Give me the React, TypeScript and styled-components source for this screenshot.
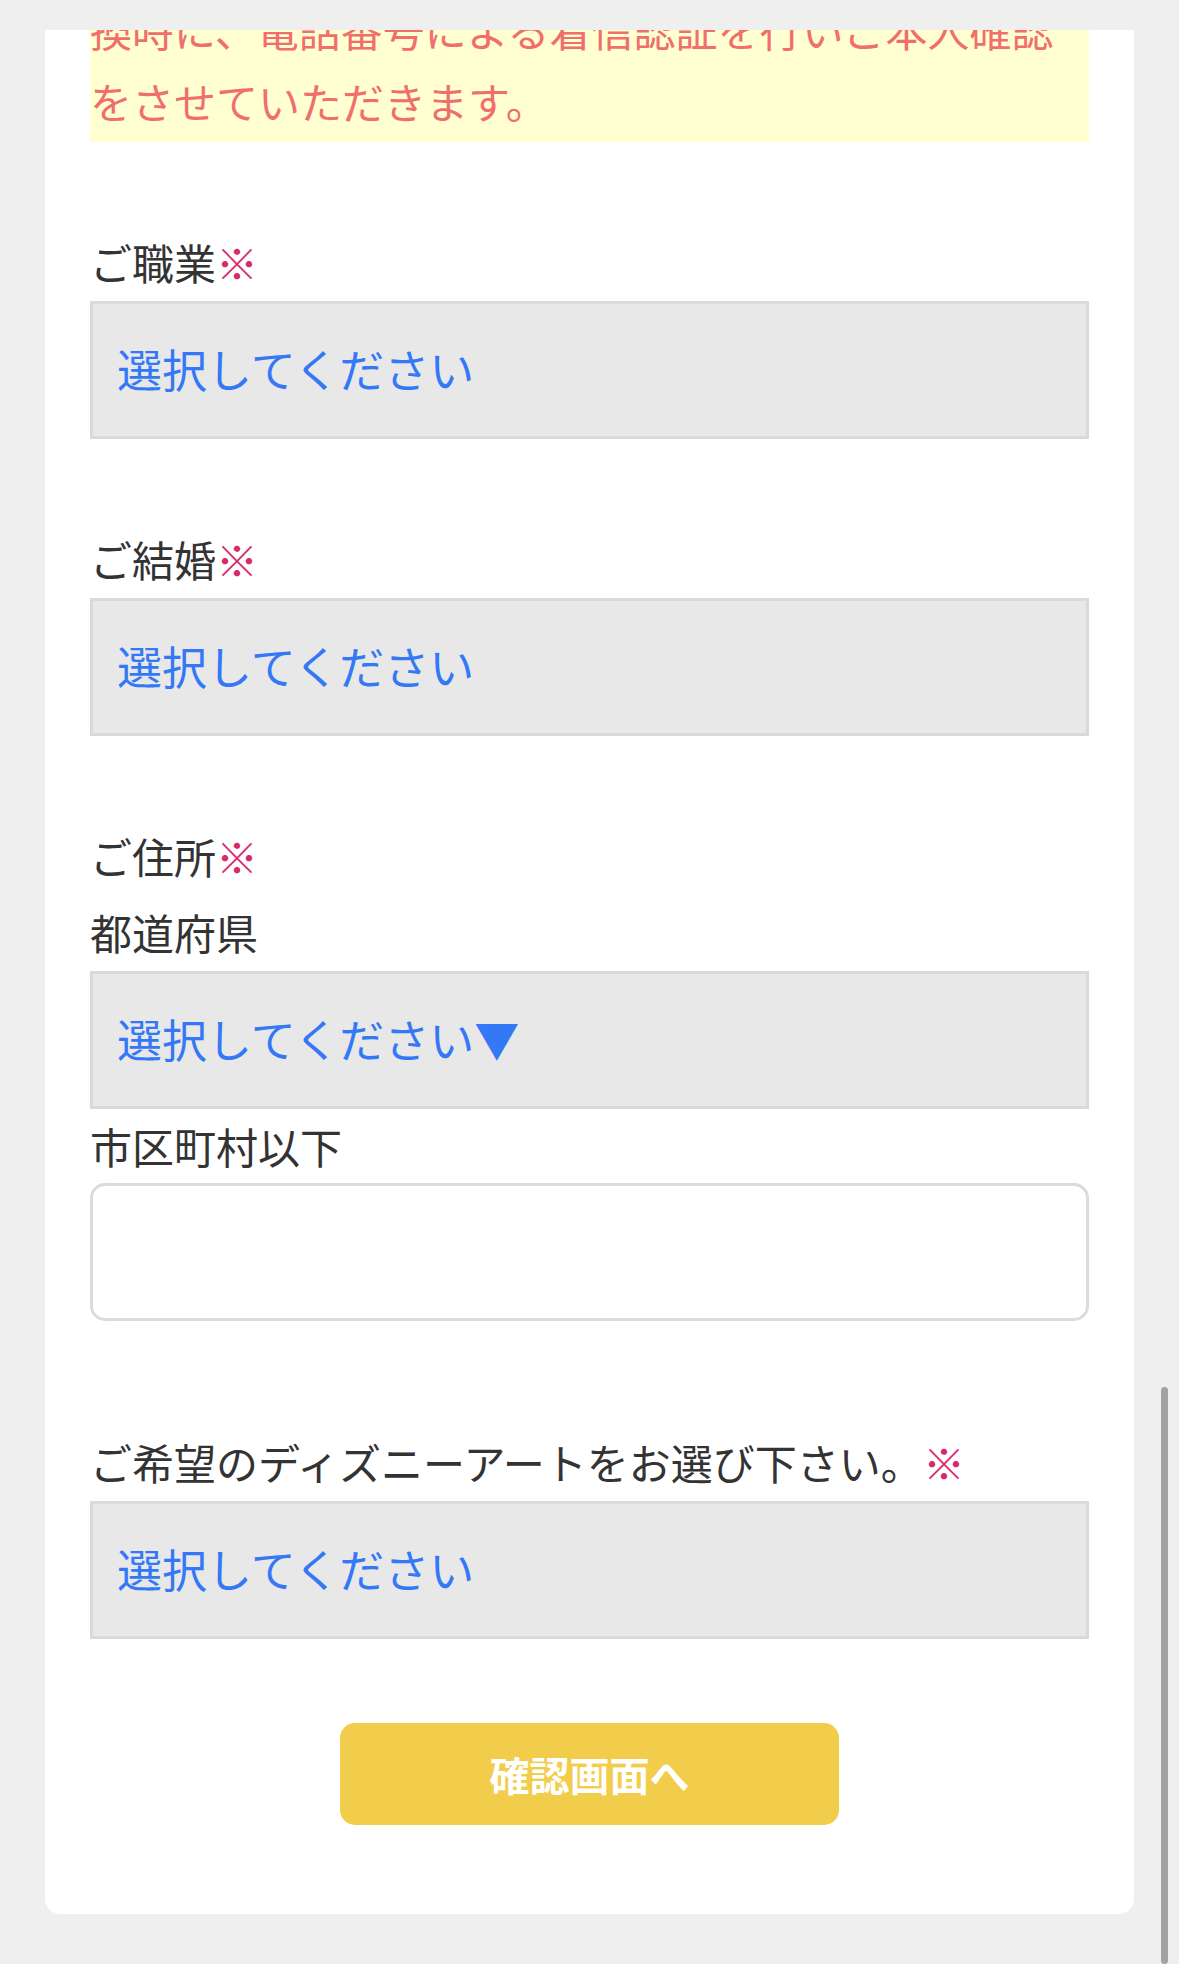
import React from 'react';
import styled, { createGlobalStyle } from 'styled-components';

const GlobalStyle = createGlobalStyle`
  html, body {
    margin: 0;
    padding: 0;
    background: #efefef;
  }
  body {
    font-family: "Noto Sans CJK JP", "Noto Sans", sans-serif;
    color: #333333;
  }
  * {
    box-sizing: border-box;
  }
`;

const Page = styled.div`
  padding: 30px 45px 50px;
`;

const Card = styled.form`
  background: #ffffff;
  border-radius: 0 0 15px 15px;
  overflow: hidden;
  padding: 0 45px 89px;
  display: flex;
  flex-direction: column;
`;

const Notice = styled.p`
  margin: -37px 0 0;
  padding-bottom: 5px;
  background: #ffffd1;
  color: #f06e6e;
  font-size: 42px;
  line-height: 72px;
`;

const Field = styled.div<{ $gap?: number }>`
  display: flex;
  flex-direction: column;
  margin-top: ${({ $gap }) => $gap ?? 90}px;
`;

const Label = styled.label<{ $top?: number; $bottom?: number }>`
  display: block;
  font-size: 42px;
  line-height: 60px;
  padding-bottom: 3px;
  color: #333333;
  margin-top: ${({ $top }) => $top ?? 0}px;
  margin-bottom: ${({ $bottom }) => $bottom ?? 6}px;
`;

const Required = styled.span`
  color: #d8296a;
`;

const Select = styled.select`
  appearance: none;
  -webkit-appearance: none;
  width: 100%;
  height: 138px;
  margin: 0;
  padding: 0 24px 4px;
  background: #e8e8e8;
  border: 3px solid #dadada;
  border-radius: 0;
  color: #3478f6;
  font-family: "Noto Sans CJK JP", "Noto Sans", sans-serif;
  font-size: 45px;
  outline: none;
`;

const TextInput = styled.input`
  width: 100%;
  height: 138px;
  margin: 0;
  padding: 0 24px;
  background: #ffffff;
  border: 3px solid #dbdbdb;
  border-radius: 15px;
  font-family: "Noto Sans CJK JP", "Noto Sans", sans-serif;
  font-size: 45px;
  outline: none;
`;

const SubmitButton = styled.button`
  align-self: center;
  width: 499px;
  height: 102px;
  margin-top: 84px;
  border: none;
  border-radius: 15px;
  background: #f2cd4b;
  color: #ffffff;
  font-family: "Noto Sans CJK JP", "Noto Sans", sans-serif;
  font-size: 40px;
  font-weight: 700;
  cursor: pointer;
`;

const ScrollThumb = styled.div`
  position: fixed;
  right: 11px;
  top: 1387px;
  bottom: 0;
  width: 7px;
  border-radius: 4px;
  background: #a2a2a2;
`;

const App: React.FC = () => {
  return (
    <>
      <GlobalStyle />
      <Page>
        <Card onSubmit={(e) => e.preventDefault()}>
          <Notice>
            換時に、電話番号による着信認証を行いご本人確認をさせていただきます。
          </Notice>

          <Field>
            <Label>
              ご職業<Required>※</Required>
            </Label>
            <Select defaultValue="">
              <option value="">選択してください</option>
            </Select>
          </Field>

          <Field>
            <Label>
              ご結婚<Required>※</Required>
            </Label>
            <Select defaultValue="">
              <option value="">選択してください</option>
            </Select>
          </Field>

          <Field>
            <Label $bottom={0}>
              ご住所<Required>※</Required>
            </Label>
            <Label $top={13}>都道府県</Label>
            <Select defaultValue="">
              <option value="">選択してください&#x25BC;&#xFE0E;</option>
            </Select>
            <Label $top={7} $bottom={4}>市区町村以下</Label>
            <TextInput type="text" />
          </Field>

          <Field $gap={111}>
            <Label>
              ご希望のディズニーアートをお選び下さい。<Required>※</Required>
            </Label>
            <Select defaultValue="">
              <option value="">選択してください</option>
            </Select>
          </Field>

          <SubmitButton type="submit">確認画面へ</SubmitButton>
        </Card>
      </Page>
      <ScrollThumb />
    </>
  );
};

export default App;
